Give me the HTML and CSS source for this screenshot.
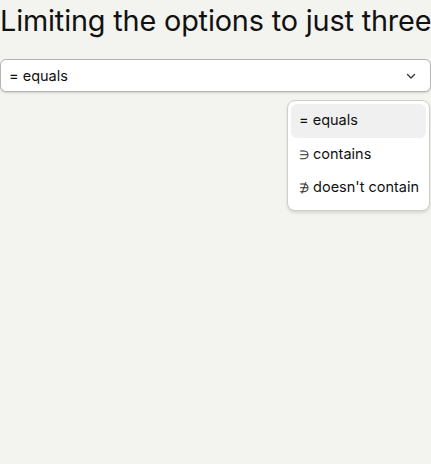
FILE: index.html
```html
<!DOCTYPE html>
<html>
<head>
<meta charset="utf-8">
<link rel="stylesheet" href="styles.css">
</head>
<body>
<h1 class="title">Limiting the options to just three</h1>
<div class="field">
  <div class="select">
    <span class="value">= equals</span>
    <svg class="chev" width="12" height="12" viewBox="0 0 12 12"><path d="M2.5 4.5 L6 8 L9.5 4.5" fill="none" stroke="#333" stroke-width="1.3" stroke-linecap="round" stroke-linejoin="round"/></svg>
  </div>
  <div class="menu">
    <div class="item active">= equals</div>
    <div class="item"><span class="sym">∋</span> contains</div>
    <div class="item"><span class="sym">∌</span> doesn't contain</div>
  </div>
</div>
</body>
</html>
```
FILE: styles.css
```css
html, body {
  margin: 0;
  padding: 0;
  background: #f3f3ef;
  font-family: Inter, "Noto Sans", sans-serif;
  color: #111;
  height: 100%;
}
.title {
  font-size: 28.8px;
  font-weight: 400;
  margin: 0;
  padding-top: 3px;
  line-height: 36px;
  white-space: nowrap;
  letter-spacing: -0.15px;
}
.field {
  position: relative;
  margin-top: 20px;
}
.select {
  box-sizing: border-box;
  height: 33px;
  background: #fff;
  border: 1px solid #b5b5b2;
  border-radius: 6px;
  box-shadow: 0 1px 2px rgba(0,0,0,0.15);
  display: flex;
  align-items: center;
  justify-content: space-between;
  padding: 0 13px 0 8px;
  font-size: 14.5px;
}
.chev { display: block; }
.menu {
  position: absolute;
  right: 1px;
  top: 41px;
  width: 143px;
  box-sizing: border-box;
  background: #fff;
  border: 1px solid #cfcfcc;
  border-radius: 8px;
  box-shadow: 0 2px 3px rgba(0,0,0,0.12);
  padding: 3px 3px 5px;
  display: flex;
  flex-direction: column;
}
.item {
  font-size: 14.5px;
  padding: 0 8px;
  height: 33.5px;
  line-height: 32px;
  border-radius: 6px;
  white-space: nowrap;
  color: #111;
}
.sym {
  font-size: 12px;
  color: #333;
}
.item.active { background: #f0f0f0; }
```
